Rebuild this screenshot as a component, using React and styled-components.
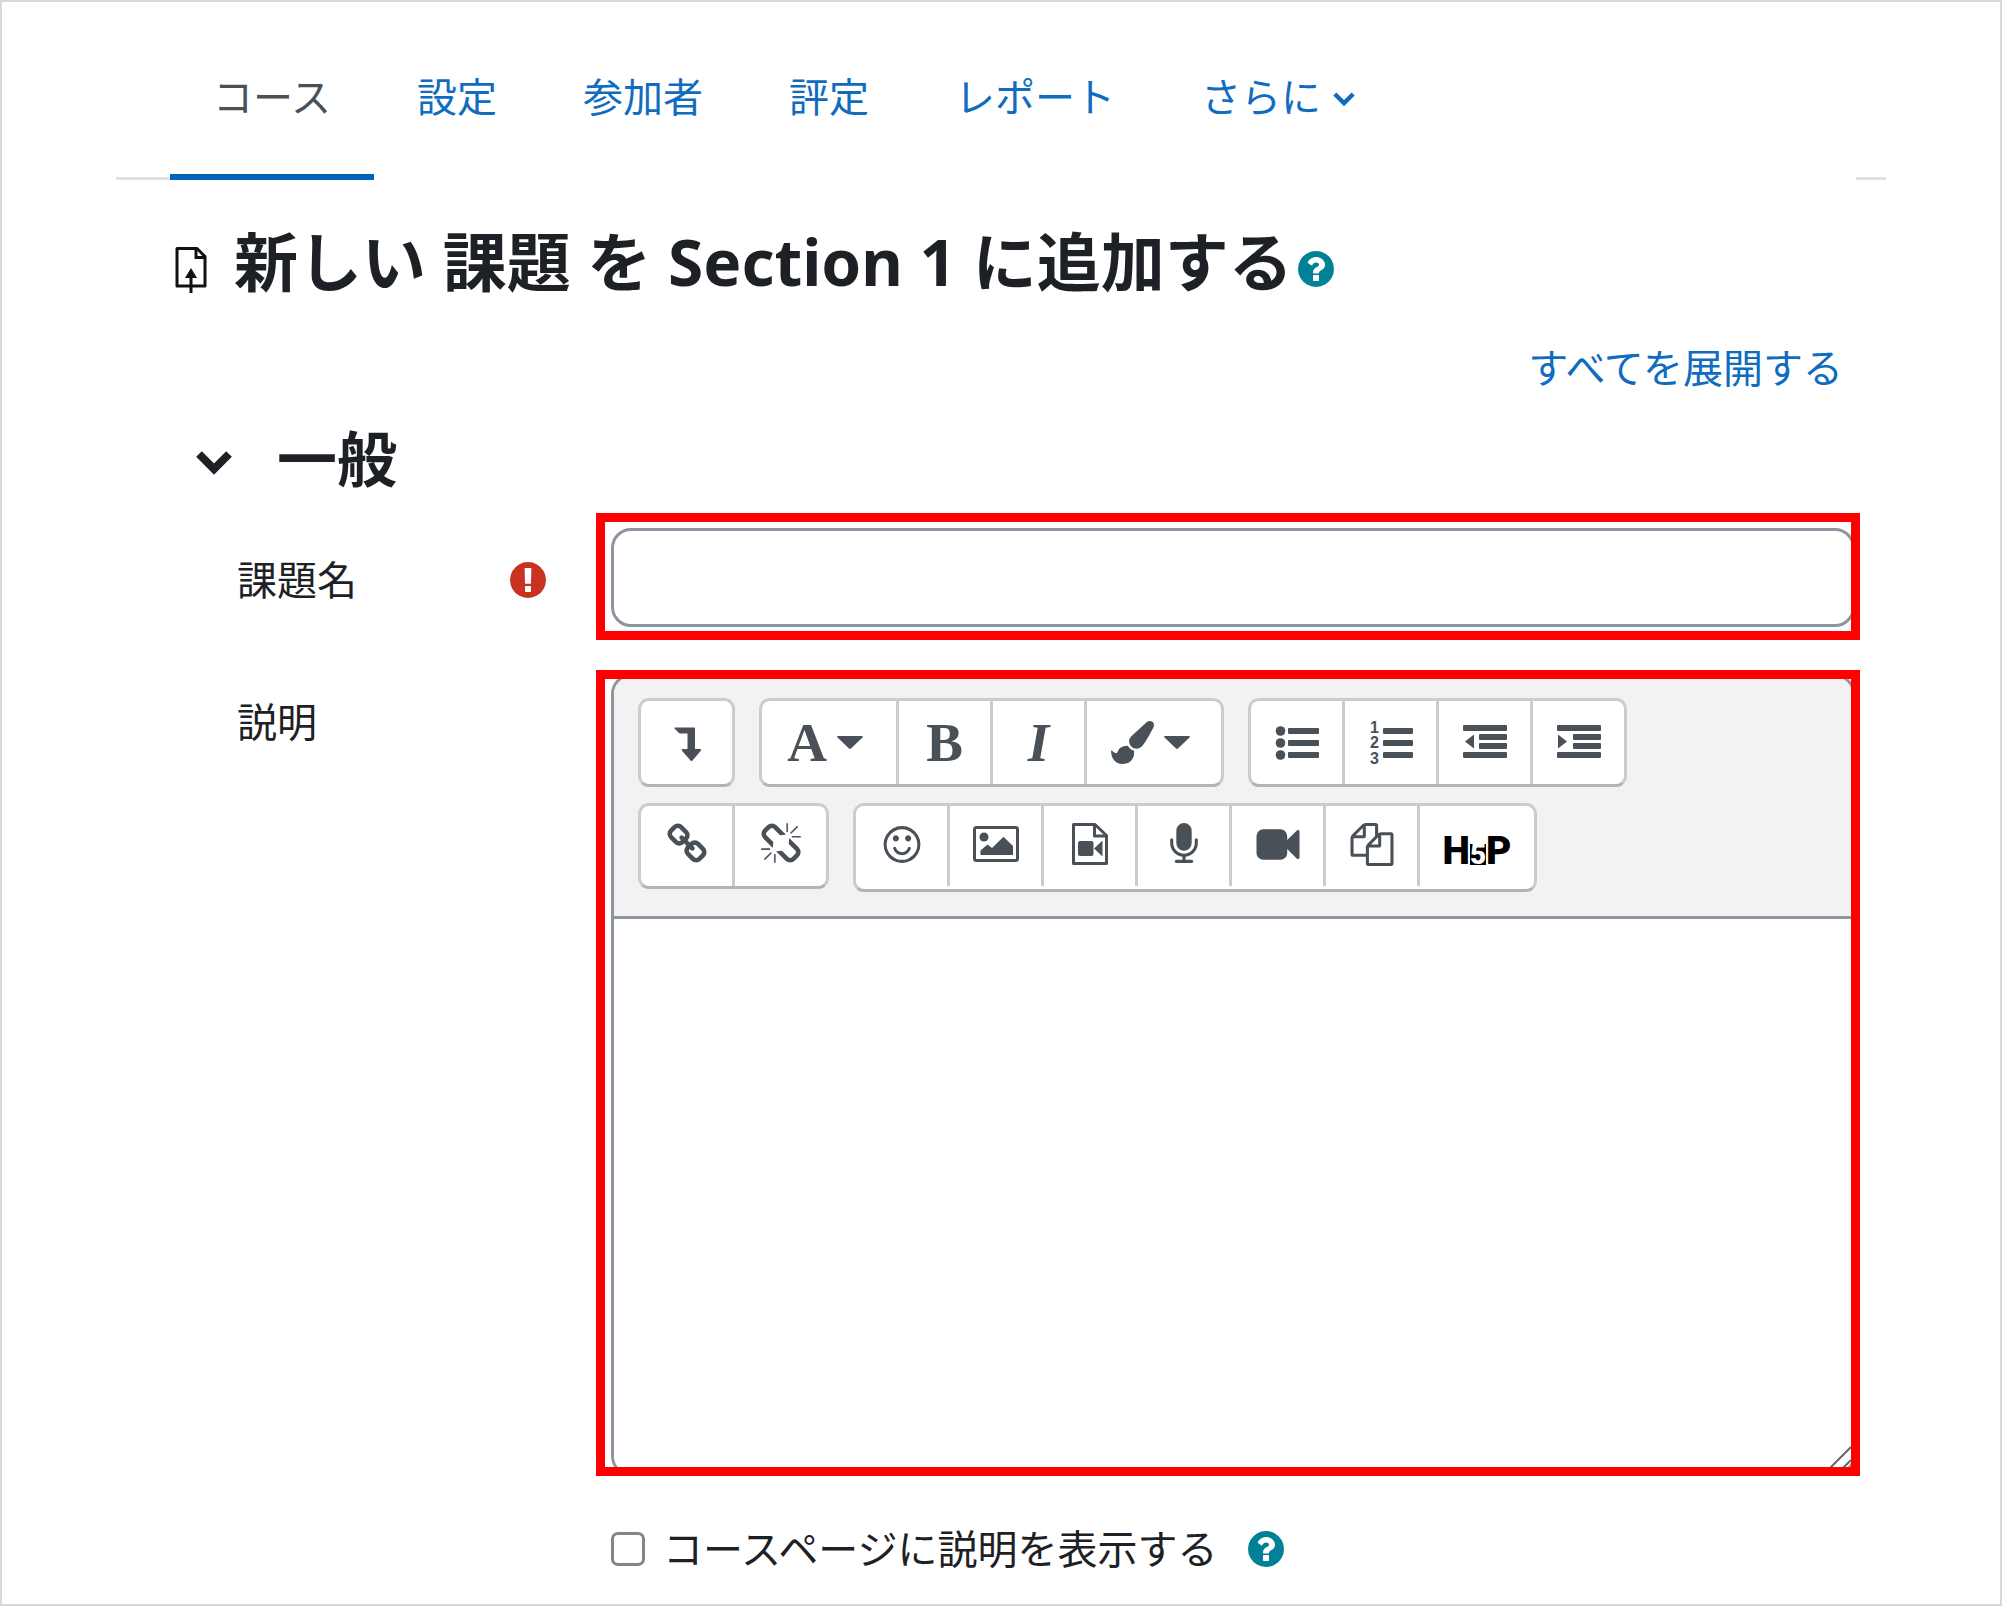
import React from "react";
import styled, { createGlobalStyle, css } from "styled-components";

const GlobalStyle = createGlobalStyle`
  *, *::before, *::after { box-sizing: border-box; }
  body {
    margin: 0;
    background: #fff;
    color: #1d2125;
    font-family: "Noto Sans", "Noto Sans CJK JP", sans-serif;
    font-size: 40px;
    line-height: 60px;
  }
`;

const Page = styled.div`
  min-height: 100vh;
  padding: 65px 114px 20px;
  border: 2px solid #d9d9d9;
`;

const NavBar = styled.nav`
  display: flex;
  align-items: flex-end;
`;

const Rule = styled.span`
  width: ${(p) => p.$width}px;
  height: 3px;
  background: #dee2e6;
`;

const Tabs = styled.div`
  display: flex;
  flex: 1;
`;

const Tab = styled.a`
  display: flex;
  align-items: center;
  gap: 12px;
  padding: 0 43px 47px;
  border-bottom: 6px solid ${(p) => (p.$active ? "#0064bc" : "transparent")};
  color: ${(p) => (p.$active ? "#495057" : "#0f6cbf")};
  text-decoration: none;
`;

const Main = styled.main`
  padding: 34px 26px 0 59px;
`;

const TitleRow = styled.header`
  display: flex;
  align-items: center;

  > svg,
  > button {
    margin-top: 14px;
  }
`;

const Title = styled.h1`
  margin: 0 5px 0 26px;
  font-size: 64px;
  font-weight: 700;
  line-height: 96px;
`;

const IconButton = styled.button`
  display: flex;
  padding: 0;
  border: 0;
  background: none;
  color: ${(p) => p.$color};
`;

const ExpandRow = styled.div`
  display: flex;
  justify-content: flex-end;
  margin: 28px 17px 0 0;
`;

const TextLink = styled.a`
  color: #0f6cbf;
  text-decoration: none;
`;

const SectionHeader = styled.div`
  display: flex;
  align-items: center;
  gap: 45px;
  margin-top: 25px;
  padding-left: 21px;
`;

const SectionTitle = styled.h2`
  margin: 0;
  font-size: 60px;
  font-weight: 700;
  line-height: 72px;
`;

const Form = styled.form`
  display: flex;
  flex-direction: column;
  gap: 30px;
  margin-top: 18px;
`;

const FieldRow = styled.div`
  display: grid;
  grid-template-columns: 421px minmax(0, 1fr);
`;

const LabelCell = styled.div`
  display: flex;
  align-items: center;
  justify-content: space-between;
  align-self: start;
  padding: ${(p) => p.$top}px 50px 0 62px;
`;

const Highlight = styled.div`
  position: relative;
  padding: ${(p) => p.$pad};

  &::after {
    content: "";
    position: absolute;
    inset: 0;
    border: 9px solid #f00;
    pointer-events: none;
  }
`;

const TextInput = styled.input`
  display: block;
  width: 100%;
  height: 99px;
  padding: 0 28px;
  border: 3px solid #8f959e;
  border-radius: 20px;
  background: #fff;
  color: inherit;
  font: inherit;
`;

const Editor = styled.div`
  position: relative;
  overflow: hidden;
  border: 3px solid #8f959e;
  border-radius: 20px;
`;

const Toolbar = styled.div`
  display: flex;
  flex-direction: column;
  gap: 16px;
  padding: 21px 24px 24px;
  border-bottom: 3px solid #8f959e;
  background: #f2f2f2;
`;

const ToolbarRow = styled.div`
  display: flex;
  flex-wrap: wrap;
  align-items: flex-start;
  gap: 24px;
`;

const ButtonGroup = styled.div`
  display: flex;
  align-items: flex-start;
  overflow: hidden;
  border: 3px solid #ccc;
  border-bottom-color: #b3b3b3;
  border-radius: 11px;
  background: #fff;
`;

const ToolButton = styled.button`
  display: flex;
  align-items: center;
  justify-content: center;
  gap: 10px;
  width: ${(p) => p.$width || 94}px;
  height: ${(p) => p.$height || 83}px;
  padding: 0 ${(p) => (p.$menu ? 8 : 0)}px 0 0;
  border: 0;
  border-right: 3px solid #ccc;
  background: none;
  color: #495057;

  &:last-child {
    width: ${(p) => (p.$width || 94) - 3}px;
    border-right: 0;
  }
`;

const Letter = styled.span`
  font-family: "Liberation Serif", serif;
  font-size: 55px;
  font-weight: 700;
  line-height: 60px;
  ${(p) => p.$italic && css`font-style: italic;`}
`;

const Logo = styled.span`
  display: flex;
  align-items: flex-end;
  padding-top: 6px;
  color: #000;
  font-family: Roboto, sans-serif;
  font-size: 39px;
  font-weight: 900;
  line-height: 40px;
`;

const LogoDigit = styled.span`
  margin-bottom: 6px;
  background: #000;
  color: #fff;
  font-size: 28px;
  line-height: 21px;
`;

const TextArea = styled.textarea`
  display: block;
  width: 100%;
  height: 554px;
  padding: 20px 28px;
  border: 0;
  outline: 0;
  resize: none;
  background: #fff;
  color: inherit;
  font: inherit;
`;

const Grip = styled.svg`
  position: absolute;
  right: 0;
  bottom: 3px;
`;

const CheckRow = styled.div`
  display: flex;
  align-items: center;
  margin: 13px 0 0 436px;
`;

const Checkbox = styled.input`
  appearance: none;
  width: 34px;
  height: 34px;
  margin: 0 18px 0 0;
  border: 3px solid #858585;
  border-radius: 7px;
  background: #fff;
`;

const CheckLabel = styled.label`
  margin-right: 31px;
`;

const glyphs = {
  brush:
    "M1615 0q70 0 122.5 46.5t52.5 116.5q0 63-45 151-332 629-465 752-97 91-218 91-126 0-216.5-92.5t-90.5-219.5q0-128 92-212l638-579q59-54 130-54zm-909 1034q39 76 106.5 130t150.5 76l1 71q4 213-129.5 347t-348.5 134q-123 0-218-46.5t-152.5-127.5-86.5-183-29-220q7 5 41 30t62 44.5 59 36.5 46 17q41 0 55-37 25-66 57.5-112.5t69.5-76 88-47.5 103-25.5 125-10.5z",
  link:
    "M1520 1216q0-40-28-68l-208-208q-28-28-68-28-42 0-72 32 3 3 19 18.5t21.5 21.5 15 19 13 25.5 3.5 27.5q0 40-28 68t-68 28q-15 0-27.5-3.5t-25.5-13-19-15-21.5-21.5-18.5-19q-33 31-33 73 0 40 28 68l206 207q27 27 68 27 40 0 68-26l147-146q28-28 28-67zm-703-705q0-40-28-68l-206-207q-28-28-68-28-39 0-68 27l-147 146q-28 28-28 67 0 40 28 68l208 208q27 27 68 27 42 0 72-31-3-3-19-18.5t-21.5-21.5-15-19-13-25.5-3.5-27.5q0-40 28-68t68-28q15 0 27.5 3.5t25.5 13 19 15 21.5 21.5 18.5 19q33-31 33-73zm895 705q0 120-85 203l-147 146q-83 83-203 83-121 0-204-85l-206-207q-83-83-83-203 0-123 88-209l-88-88q-86 88-208 88-120 0-204-84l-208-208q-84-84-84-204t85-203l147-146q83-83 203-83 121 0 204 85l206 207q83 83 83 203 0 123-88 209l88 88q86-88 208-88 120 0 204 84l208 208q84 84 84 204z",
  unlink:
    "M503 1271l-256 256q-10 9-23 9-12 0-23-9-9-10-9-23t9-23l256-256q10-9 23-9t23 9q9 10 9 23t-9 23zm169 41v320q0 14-9 23t-23 9-23-9-9-23v-320q0-14 9-23t23-9 23 9 9 23zm-224-224q0 14-9 23t-23 9h-320q-14 0-23-9t-9-23 9-23 23-9h320q14 0 23 9t9 23zm1264 128q0 120-85 203l-147 146q-83 83-203 83-121 0-204-85l-334-335q-21-21-42-56l239-18 273 274q28 28 68 28t68-27l147-146q28-28 28-67 0-40-28-68l-274-275 18-239q35 21 56 42l336 336q84 86 84 204zm-617-724l-239 18-273-274q-28-28-68-28-39 0-68 27l-147 146q-28 28-28 67 0 40 28 68l274 274-18 240q-35-21-56-42l-336-336q-84-86-84-204 0-120 85-203l147-146q83-83 203-83 121 0 204 85l334 335q21 21 42 56zm633 84q0 14-9 23t-23 9h-320q-14 0-23-9t-9-23 9-23 23-9h320q14 0 23 9t9 23zm-544-544v320q0 14-9 23t-23 9-23-9-9-23v-320q0-14 9-23t23-9 23 9 9 23zm407 151l-256 256q-11 9-23 9t-23-9q-9-10-9-23t9-23l256-256q10-9 23-9t23 9q9 10 9 23t-9 23z",
  smile:
    "M1262 1075q-37 121-138 195t-228 74-228-74-138-195q-8-25 4-48.5t38-31.5q25-8 48.5 4t31.5 38q25 80 92.5 129.5t151.5 49.5 151.5-49.5 92.5-129.5q8-26 32-38t49-4 37 31.5 4 48.5zm-494-435q0 53-37.5 90.5t-90.5 37.5-90.5-37.5-37.5-90.5 37.5-90.5 90.5-37.5 90.5 37.5 37.5 90.5zm512 0q0 53-37.5 90.5t-90.5 37.5-90.5-37.5-37.5-90.5 37.5-90.5 90.5-37.5 90.5 37.5 37.5 90.5zm256 256q0-130-51-248.5t-136.5-204-204-136.5-248.5-51-248.5 51-204 136.5-136.5 204-51 248.5 51 248.5 136.5 204 204 136.5 248.5 51 248.5-51 204-136.5 136.5-204 51-248.5zm128 0q0 209-103 385.5t-279.5 279.5-385.5 103-385.5-103-279.5-279.5-103-385.5 103-385.5 279.5-279.5 385.5-103 385.5 103 279.5 279.5 103 385.5z",
  mic:
    "M1472 704v128q0 221-147.5 384.5t-364.5 187.5v132h256q26 0 45 19t19 45-19 45-45 19h-640q-26 0-45-19t-19-45 19-45 45-19h256v-132q-217-24-364.5-187.5t-147.5-384.5v-128q0-26 19-45t45-19 45 19 19 45v128q0 185 131.5 316.5t316.5 131.5 316.5-131.5 131.5-316.5v-128q0-26 19-45t45-19 45 19 19 45zm-256-384v512q0 132-94 226t-226 94-226-94-94-226v-512q0-132 94-226t226-94 226 94 94 226z",
  video:
    "M1792 352v1088q0 42-39 59-13 5-25 5-27 0-45-19l-403-403v166q0 119-84.5 203.5t-203.5 84.5h-704q-119 0-203.5-84.5t-84.5-203.5v-704q0-119 84.5-203.5t203.5-84.5h704q119 0 203.5 84.5t84.5 203.5v165l403-402q18-19 45-19 12 0 25 5 39 17 39 59z",
  files:
    "M1696 384q40 0 68 28t28 68v1216q0 40-28 68t-68 28h-960q-40 0-68-28t-28-68v-288h-544q-40 0-68-28t-28-68v-672q0-40 20-88t48-76l408-408q28-28 76-48t88-20h416q40 0 68 28t28 68v328q68-40 128-40h416zm-544 213l-299 299h299v-299zm-640-384l-299 299h299v-299zm196 647l316-316v-416h-384v416q0 40-28 68t-68 28h-416v640h512v-256q0-40 20-88t48-76zm956 804v-1152h-384v416q0 40-28 68t-68 28h-416v640h896z",
  question:
    "M1024 1376v-192q0-14-9-23t-23-9h-192q-14 0-23 9t-9 23v192q0 14 9 23t23 9h192q14 0 23-9t9-23zm256-672q0-88-55.5-163t-138.5-116-170-41q-243 0-371 213-15 24 8 42l132 100q7 6 19 6 16 0 25-12 53-68 86-92 34-24 86-24 48 0 85.5 26t37.5 59q0 38-20 61t-68 45q-63 28-115.5 86.5t-52.5 125.5v36q0 14 9 23t23 9h192q14 0 23-9t9-23q0-19 21.5-49.5t54.5-49.5q32-18 49-28.5t46-35 44.5-48 28-60.5 12.5-81zm384 192q0 209-103 385.5t-279.5 279.5-385.5 103-385.5-103-279.5-279.5-103-385.5 103-385.5 279.5-279.5 385.5-103 385.5 103 279.5 279.5 103 385.5z",
  required:
    "M896 128q209 0 385.5 103t279.5 279.5 103 385.5-103 385.5-279.5 279.5-385.5 103-385.5-103-279.5-279.5-103-385.5 103-385.5 279.5-279.5 385.5-103zm128 1247v-190q0-14-9-23.5t-22-9.5h-192q-13 0-23 10t-10 23v190q0 13 10 23t23 10h192q13 0 22-9.5t9-23.5zm-2-344l18-621q0-12-10-18-10-8-24-8h-220q-14 0-24 8-10 6-10 18l17 621q0 10 10 17.5t24 7.5h185q14 0 23.5-7.5t10.5-17.5z",
};

const Glyph = ({ name }) => (
  <svg width="48" height="48" viewBox="-104 -42 2000 2000" fill="currentColor" aria-hidden="true">
    <path d={glyphs[name]} />
  </svg>
);

const Brush = () => (
  <svg width="43" height="43" viewBox="0 0 1792 1792" fill="currentColor" aria-hidden="true">
    <path d={glyphs.brush} />
  </svg>
);

/* Round badge cropped to the circle itself */
const Badge = ({ name }) => (
  <svg width="36" height="36" viewBox="128 128 1536 1536" fill="currentColor" aria-hidden="true">
    <path d={glyphs[name]} />
  </svg>
);

const Drawing = ({ children }) => (
  <svg width="48" height="48" viewBox="0 0 48 48" fill="currentColor" aria-hidden="true">
    {children}
  </svg>
);

const Caret = () => (
  <svg width="26" height="13" viewBox="0 0 26 13" fill="currentColor" aria-hidden="true">
    <path d="M1 0H25Q26.500 .5 25.500 1.500L14 12.500Q13 13.300 12 12.500L.5 1.500Q-.5 .5 1 0Z" />
  </svg>
);

const LevelDown = () => (
  <Drawing>
    <path d="M12 8.500H31Q32 8.500 32 9.500V30H37Q39 30 37.800 31.700L29.500 41.500Q28.500 42.600 27.500 41.500L19 31.700Q17.800 30 20 30H24.500V14.500H17.500Q16.500 14.500 16 14L11.500 9.600Q11 8.600 12 8.500Z" />
  </Drawing>
);

const BulletList = () => (
  <Drawing>
    {[12, 24, 36].map((y) => (
      <g key={y}>
        <circle cx="7.500" cy={y} r="4.800" />
        <rect x="15" y={y - 3} width="31" height="6" rx="1" />
      </g>
    ))}
  </Drawing>
);

const NumberList = () => (
  <Drawing>
    {[12, 24, 36].map((y, i) => (
      <g key={y}>
        <text x="3" y={y + [2, 5, 9][i]} fontFamily="Liberation Sans" fontSize="16" fontWeight="700">
          {i + 1}
        </text>
        <rect x="16" y={y - 3} width="30" height="6" rx="1" />
      </g>
    ))}
  </Drawing>
);

const Indent = ({ out }) => (
  <Drawing>
    <rect x="2" y="6" width="44" height="6" rx="1" />
    <rect x="18" y="15" width="28" height="6" rx="1" />
    <rect x="18" y="24" width="28" height="6" rx="1" />
    <rect x="2" y="33" width="44" height="6" rx="1" />
    <path d={out ? "M13 15.500V29.500L4 22.500Z" : "M3 15.500V29.500L12 22.500Z"} />
  </Drawing>
);

const Picture = () => (
  <Drawing>
    <rect x="2.500" y="5.500" width="43" height="33" rx="2" fill="none" stroke="currentColor" strokeWidth="3" />
    <circle cx="12" cy="15" r="4.500" />
    <path d="M8.500 33V28.500L15.500 22.500L20 26L31.500 14.700L41 24V33Z" />
  </Drawing>
);

const FileVideo = () => (
  <Drawing>
    <g fill="none" stroke="currentColor" strokeWidth="3" strokeLinejoin="round">
      <path d="M7.500 2.500H29L40.500 13.500V41.500H7.500Z" />
      <path d="M28.500 2.500V14H40.500" />
    </g>
    <rect x="12" y="19" width="15.500" height="15" rx="2" />
    <path d="M28 26.500L36.500 18.500V34.500Z" />
  </Drawing>
);

const AssignIcon = () => (
  <svg width="33" height="48" viewBox="0 0 33 48" fill="none" stroke="#111" strokeWidth="3" aria-hidden="true">
    <path d="M2 3.500H22L30 11.500V41H2Z" strokeLinejoin="round" />
    <path d="M21 3.500V12.500H30" strokeWidth="3" />
    <path d="M16 48V30" strokeWidth="3" />
    <path d="M16 23L22 33H10Z" fill="#111" stroke="none" />
  </svg>
);

const Chevron = ({ size, weight }) => (
  <svg width={size} height={size} viewBox="0 0 36 36" fill="none" stroke="currentColor" strokeWidth={weight} aria-hidden="true">
    <path d="M3 13L18 28L33 13" />
  </svg>
);

const tabs = ["コース", "設定", "参加者", "評定", "レポート", "さらに"];

export default function App() {
  return (
    <>
      <GlobalStyle />
      <Page>
        <NavBar>
          <Rule $width={54} />
          <Tabs>
            {tabs.map((name, i) => (
              <Tab key={name} href="#" $active={i === 0}>
                {name}
                {name === "さらに" && <Chevron size={22} weight={7} />}
              </Tab>
            ))}
          </Tabs>
          <Rule $width={30} />
        </NavBar>
        <Main>
          <TitleRow>
            <AssignIcon />
            <Title>新しい 課題 を Section 1 に追加する</Title>
            <IconButton type="button" $color="#008196" aria-label="ヘルプ">
              <Badge name="question" />
            </IconButton>
          </TitleRow>
          <ExpandRow>
            <TextLink href="#">すべてを展開する</TextLink>
          </ExpandRow>
          <SectionHeader>
            <IconButton type="button" $color="#1d2125" aria-label="一般">
              <Chevron size={36} weight={8} />
            </IconButton>
            <SectionTitle>一般</SectionTitle>
          </SectionHeader>
          <Form>
            <FieldRow>
              <LabelCell $top={37}>
                <label htmlFor="name">課題名</label>
                <IconButton as="span" $color="#ca3120">
                  <Badge name="required" />
                </IconButton>
              </LabelCell>
              <Highlight $pad="15px 5px 13px 15px">
                <TextInput id="name" type="text" />
              </Highlight>
            </FieldRow>
            <FieldRow>
              <LabelCell $top={22}>
                <label htmlFor="description">説明</label>
              </LabelCell>
              <Highlight $pad="4px 5px 0 15px">
                <Editor>
                  <Toolbar>
                    <ToolbarRow>
                      <ButtonGroup>
                        <ToolButton type="button"><LevelDown /></ToolButton>
                      </ButtonGroup>
                      <ButtonGroup>
                        <ToolButton type="button" $width={137} $menu><Letter>A</Letter><Caret /></ToolButton>
                        <ToolButton type="button"><Letter>B</Letter></ToolButton>
                        <ToolButton type="button"><Letter $italic>I</Letter></ToolButton>
                        <ToolButton type="button" $width={137} $menu><Brush /><Caret /></ToolButton>
                      </ButtonGroup>
                      <ButtonGroup>
                        <ToolButton type="button"><BulletList /></ToolButton>
                        <ToolButton type="button"><NumberList /></ToolButton>
                        <ToolButton type="button"><Indent out /></ToolButton>
                        <ToolButton type="button"><Indent /></ToolButton>
                      </ButtonGroup>
                    </ToolbarRow>
                    <ToolbarRow>
                      <ButtonGroup>
                        <ToolButton type="button" $height={80}><Glyph name="link" /></ToolButton>
                        <ToolButton type="button" $height={80}><Glyph name="unlink" /></ToolButton>
                      </ButtonGroup>
                      <ButtonGroup>
                        <ToolButton type="button" $height={80}><Glyph name="smile" /></ToolButton>
                        <ToolButton type="button" $height={80}><Picture /></ToolButton>
                        <ToolButton type="button" $height={80}><FileVideo /></ToolButton>
                        <ToolButton type="button" $height={80}><Glyph name="mic" /></ToolButton>
                        <ToolButton type="button" $height={80}><Glyph name="video" /></ToolButton>
                        <ToolButton type="button" $height={80}><Glyph name="files" /></ToolButton>
                        <ToolButton type="button" $width={117}>
                          <Logo>H<LogoDigit>5</LogoDigit>P</Logo>
                        </ToolButton>
                      </ButtonGroup>
                    </ToolbarRow>
                  </Toolbar>
                  <TextArea id="description" />
                  <Grip width="24" height="24" viewBox="0 0 24 24" stroke="#666" strokeWidth="2" aria-hidden="true">
                    <path d="M1 23L23 1M14 23L23 14" />
                  </Grip>
                </Editor>
              </Highlight>
            </FieldRow>
            <CheckRow>
              <Checkbox id="show" type="checkbox" />
              <CheckLabel htmlFor="show">コースページに説明を表示する</CheckLabel>
              <IconButton type="button" $color="#008196" aria-label="ヘルプ">
                <Badge name="question" />
              </IconButton>
            </CheckRow>
          </Form>
        </Main>
      </Page>
    </>
  );
}
